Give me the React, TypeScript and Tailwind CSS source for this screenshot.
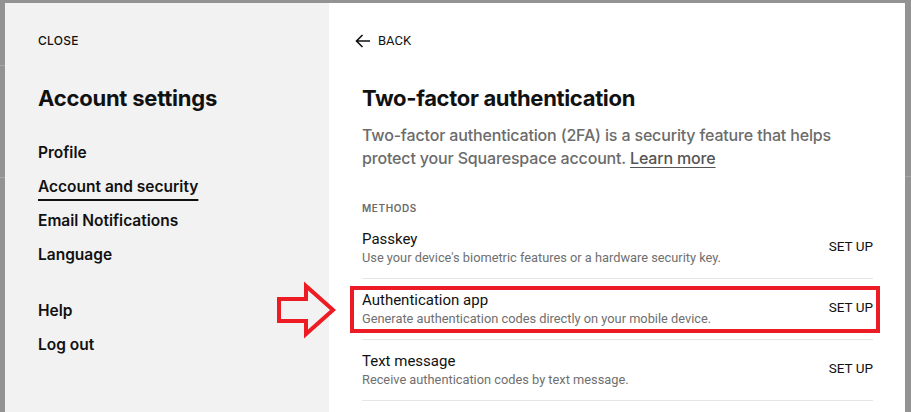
import React from 'react';

const navTop = ['Profile', 'Account and security', 'Email Notifications', 'Language'];
const navBottom = ['Help', 'Log out'];

const methods = [
  { title: 'Passkey', desc: "Use your device's biometric features or a hardware security key." },
  { title: 'Authentication app', desc: 'Generate authentication codes directly on your mobile device.' },
  { title: 'Text message', desc: 'Receive authentication codes by text message.' },
];

const ui = "font-['Inter','Noto_Sans',sans-serif]";
const plain = "font-['Roboto','Liberation_Sans',sans-serif]";

export default function App() {
  return (
    <div className="relative w-[911px] h-[412px] overflow-hidden bg-[#939393] pt-[3px] pl-[5px] pr-[6px]">
      {/* faint lines in the page behind the dialog */}
      <div className="absolute left-0 top-[65px] w-[5px] h-px bg-[#a4a4a4]" />
      <div className="absolute left-0 top-[177px] w-[5px] h-px bg-[#a4a4a4]" />
      <div className="absolute right-0 top-[176px] w-[6px] h-px bg-[#a4a4a4]" />

      <div className="flex h-full">
        <aside className={`w-[324px] shrink-0 bg-[#f2f2f2] pl-[33px] pt-[30px] text-[#111] ${ui}`}>
          <button className="block text-[12px] leading-[16px] font-medium tracking-[0.02em]">CLOSE</button>
          <h2 className="mt-[35px] text-[22px] leading-[28px] font-bold tracking-[-0.01em]">Account settings</h2>
          <nav className="mt-[24px]">
            {navTop.map((n) => (
              <div key={n} className="h-[34px] flex items-center text-[15.5px] font-semibold">
                <span
                  className={
                    n === 'Account and security'
                      ? 'underline decoration-2 underline-offset-[7px] decoration-[#111]'
                      : ''
                  }
                >
                  {n}
                </span>
              </div>
            ))}
            <div className="h-[22px]" />
            {navBottom.map((n) => (
              <div key={n} className="h-[34px] flex items-center text-[15.5px] font-semibold">
                {n}
              </div>
            ))}
          </nav>
        </aside>

        <main className="flex-1 bg-white pl-[33px] pr-[32px] pt-[30px]">
          <button className={`-ml-[7px] flex items-center gap-[7px] text-[13px] leading-[16px] text-[#111] ${plain}`}>
            <svg width="16" height="14" viewBox="0 0 16 14" fill="none" stroke="#111" strokeWidth="1.6">
              <path d="M15 7H1.5M7.5 1L1.5 7l6 6" />
            </svg>
            BACK
          </button>
          <h1 className={`mt-[35px] text-[22px] leading-[28px] font-bold text-[#111] tracking-[-0.015em] ${ui}`}>
            Two-factor authentication
          </h1>
          <p className={`mt-[12px] text-[16px] leading-[23px] font-medium text-[#6b6b6b] tracking-[-0.01em] ${ui}`}>
            Two-factor authentication (2FA) is a security feature that helps
            <br />
            protect your Squarespace account.{' '}
            <span className="underline underline-offset-[3px] text-[#555]">Learn more</span>
          </p>
          <div className={`mt-[31px] text-[10px] leading-[14px] font-semibold tracking-[0.06em] text-[#6b6b6b] ${ui}`}>
            METHODS
          </div>
          <div className={`mt-[3px] ${plain}`}>
            {methods.map((m) => (
              <div key={m.title} className="flex items-center justify-between border-b border-[#e6e6e6] pt-[11px] pb-[12px]">
                <div>
                  <div className="text-[15px] leading-[20px] text-[#111]">{m.title}</div>
                  <div className="mt-[1px] text-[12.8px] leading-[16px] text-[#6f6f6f]">{m.desc}</div>
                </div>
                <button className="-mt-[3px] text-[13.5px] leading-[16px] font-normal text-[#111]">SET UP</button>
              </div>
            ))}
          </div>
        </main>
      </div>

      {/* annotation overlay */}
      <div className="absolute left-[350px] top-[286px] w-[530px] h-[47px] border-4 border-[#ed1c24]" />
      <svg className="absolute left-[274px] top-[281px]" width="64" height="58" viewBox="0 0 64 58">
        <polygon
          points="5,18 32,18 32,5 59,29 32,53 32,40 5,40"
          fill="none"
          stroke="#ed1c24"
          strokeWidth="4"
          strokeLinejoin="miter"
        />
      </svg>
    </div>
  );
}
